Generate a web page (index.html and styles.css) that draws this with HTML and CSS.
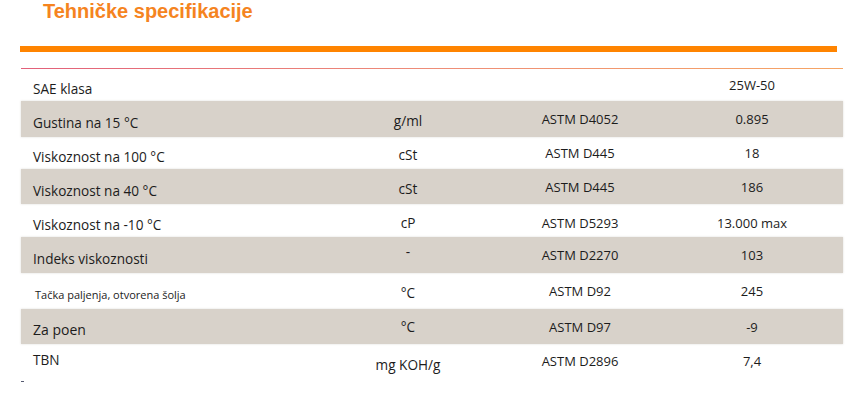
FILE: index.html
```html
<!DOCTYPE html>
<html lang="sr">
<head>
<meta charset="utf-8">
<title>Tehničke specifikacije</title>
<link rel="stylesheet" href="styles.css">
</head>
<body>
<div class="page">
  <h1 class="title">Tehničke specifikacije</h1>
  <div class="bar"></div>
  <div class="rule"></div>
  <div class="table">
    <div class="row r32">
      <div class="c label">SAE klasa</div><div class="c unit"></div><div class="c method"></div><div class="c val">25W-50</div><div class="c"></div>
    </div>
    <div class="row alt r36">
      <div class="c label">Gustina na 15 °C</div><div class="c unit">g/ml</div><div class="c method">ASTM D4052</div><div class="c val">0.895</div><div class="c"></div>
    </div>
    <div class="row r32">
      <div class="c label">Viskoznost na 100 °C</div><div class="c unit">cSt</div><div class="c method">ASTM D445</div><div class="c val">18</div><div class="c"></div>
    </div>
    <div class="row alt r35">
      <div class="c label">Viskoznost na 40 °C</div><div class="c unit">cSt</div><div class="c method">ASTM D445</div><div class="c val">186</div><div class="c"></div>
    </div>
    <div class="row r33">
      <div class="c label">Viskoznost na -10 °C</div><div class="c unit">cP</div><div class="c method low">ASTM D5293</div><div class="c val low">13.000 max</div><div class="c"></div>
    </div>
    <div class="row alt r36">
      <div class="c label">Indeks viskoznosti</div><div class="c unit dash">-</div><div class="c method">ASTM D2270</div><div class="c val">103</div><div class="c"></div>
    </div>
    <div class="row r36">
      <div class="c label small">Tačka paljenja, otvorena šolja</div><div class="c unit">°C</div><div class="c method">ASTM D92</div><div class="c val">245</div><div class="c"></div>
    </div>
    <div class="row alt r35">
      <div class="c label big">Za poen</div><div class="c unit mid">°C</div><div class="c method">ASTM D97</div><div class="c val">-9</div><div class="c"></div>
    </div>
    <div class="row r34">
      <div class="c label up">TBN</div><div class="c unit down">mg KOH/g</div><div class="c method">ASTM D2896</div><div class="c val">7,4</div><div class="c"></div>
    </div>
  </div>
  <div class="tick"></div>
</div>
</body>
</html>
```

FILE: styles.css
```css
html, body {
  margin: 0;
  padding: 0;
  background: #ffffff;
}

.page {
  width: 867px;
  height: 407px;
  overflow: hidden;
  font-family: "Open Sans", "Noto Sans", sans-serif;
  font-weight: 500;
  color: #1c1c1c;
}

.title {
  margin: 0;
  padding-left: 43px;
  height: 23px;
  font-family: "Liberation Sans", Arial, sans-serif;
  font-weight: bold;
  font-size: 20px;
  line-height: 23px;
  color: #f5841f;
}

.bar {
  margin: 23px 0 0 20px;
  width: 817px;
  height: 6px;
  background: #ff8400;
}

.rule {
  margin: 16px 0 0 21px;
  width: 822px;
  height: 1px;
  background: linear-gradient(to right, #e2607a, #ee8d78 50%, #f6a564);
}

.table {
  margin-left: 21px;
  width: 822px;
}

.row {
  display: grid;
  grid-template-columns: 319px 136px 208px 136px 23px;
  align-items: center;
  font-size: 13px;
  line-height: 18px;
}

.row.alt {
  background: #d8d2ca;
  box-shadow: 0 0 2px rgba(120, 110, 100, 0.25);
}

.r32 { height: 32px; }
.r33 { height: 33px; }
.r34 { height: 34px; }
.r35 { height: 35px; }
.r36 { height: 36px; }

.c {
  text-align: center;
  white-space: nowrap;
}

.label {
  text-align: left;
  padding-left: 12px;
  padding-top: 8px;
  font-size: 13.6px;
}

.label.small {
  font-size: 11px;
  padding-left: 14px;
}

.label.big {
  font-size: 14px;
  padding-top: 6px;
}

.label.up {
  padding-top: 0;
  padding-bottom: 2px;
}

.unit {
  padding-top: 4px;
  font-size: 13.6px;
}

.unit.mid {
  padding-top: 0;
}

.unit.down {
  padding-top: 8px;
}

.unit.dash {
  padding-top: 0;
  padding-bottom: 6px;
}

.low {
  padding-top: 5px;
}

.tick {
  margin: 3px 0 0 21px;
  width: 3px;
  height: 1px;
  background: #555a70;
}
```
